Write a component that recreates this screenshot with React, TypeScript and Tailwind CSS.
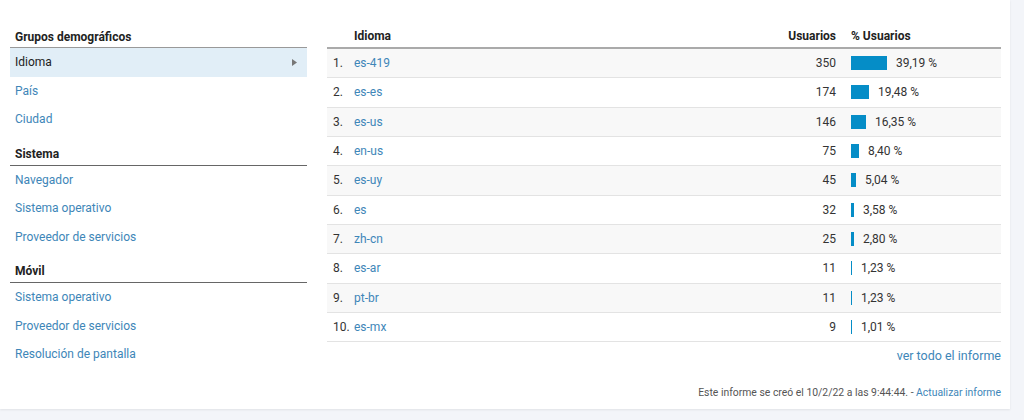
import React from 'react';

const LINK = 'text-[#3e86b8]';

const SECTIONS = [
  { title: 'Grupos demográficos', items: ['Idioma', 'País', 'Ciudad'] },
  { title: 'Sistema', items: ['Navegador', 'Sistema operativo', 'Proveedor de servicios'] },
  { title: 'Móvil', items: ['Sistema operativo', 'Proveedor de servicios', 'Resolución de pantalla'] },
];

const ROWS = [
  { lang: 'es-419', users: 350, pct: 39.19 },
  { lang: 'es-es', users: 174, pct: 19.48 },
  { lang: 'es-us', users: 146, pct: 16.35 },
  { lang: 'en-us', users: 75, pct: 8.4 },
  { lang: 'es-uy', users: 45, pct: 5.04 },
  { lang: 'es', users: 32, pct: 3.58 },
  { lang: 'zh-cn', users: 25, pct: 2.8 },
  { lang: 'es-ar', users: 11, pct: 1.23 },
  { lang: 'pt-br', users: 11, pct: 1.23 },
  { lang: 'es-mx', users: 9, pct: 1.01 },
];

const fmt = (n: number) => n.toFixed(2).replace('.', ',') + ' %';

export default function App() {
  return (
    <div
      className="w-[1024px] h-[420px] bg-[#f3f5f9] overflow-hidden text-[12px] text-[#222]"
      style={{ fontFamily: 'Roboto, "Liberation Sans", sans-serif' }}
    >
      <div className="w-[1010px] h-[409px] bg-white shadow-[0_1px_2px_rgba(0,0,0,0.08)] flex pl-[10px] pr-[9px] pt-[17px]">
        {/* Left navigation */}
        <div className="w-[297px] shrink-0">
          {SECTIONS.map((s, si) => (
            <div key={s.title}>
              <div
                className={`flex items-end pl-[5px] font-bold border-b ${
                  si === 0 ? 'h-[31px] pb-[1px] border-[#999]' : 'h-[32px] pb-[2px] border-[#666]'
                }`}
              >
                {s.title}
              </div>
              {s.items.map((item, ii) => {
                const active = si === 0 && ii === 0;
                return (
                  <div
                    key={item}
                    className={`h-[28.5px] flex items-center pl-[5px] pr-[10px] ${
                      active ? 'bg-[#e1eef7] text-[#222]' : LINK
                    }`}
                  >
                    <span className="flex-1">{item}</span>
                    {active && (
                      <svg width="5" height="7" viewBox="0 0 5 7">
                        <path d="M0 0 L5 3.5 L0 7 Z" fill="#777" />
                      </svg>
                    )}
                  </div>
                );
              })}
            </div>
          ))}
        </div>

        {/* Table */}
        <div className="flex-1 ml-[20px] flex flex-col">
          <div className="h-[32px] flex items-end pb-[2px] font-bold border-b-2 border-[#aaa] pl-[27px]">
            <span className="flex-1">Idioma</span>
            <span className="w-[100px] text-right">Usuarios</span>
            <span className="w-[165px] pl-[15px]">% Usuarios</span>
          </div>
          {ROWS.map((r, i) => (
            <div
              key={r.lang}
              className={`h-[29.33px] flex items-center border-b border-[#e3e3e3] pl-[6px] ${
                i % 2 === 0 ? 'bg-[#f8f8f8]' : 'bg-white'
              }`}
            >
              <span className="w-[21px] text-[#333]">{i + 1}.</span>
              <span className={`flex-1 ${LINK}`}>{r.lang}</span>
              <span className="w-[100px] text-right text-[#333]">{r.users}</span>
              <span className="w-[165px] pl-[15px] flex items-center text-[#333]">
                <span
                  className="h-[14px] bg-[#058dc7] shrink-0"
                  style={{ width: Math.max(1, Math.round((r.pct / 39.19) * 36)) }}
                />
                <span className="ml-[9px]">{fmt(r.pct)}</span>
              </span>
            </div>
          ))}
          <div className={`text-right mt-[5px] text-[12.5px] ${LINK}`}>ver todo el informe</div>
          <div className="text-right mt-[19px] text-[10.4px] text-[#555]">
            Este informe se creó el 10/2/22 a las 9:44:44. - <span className={LINK}>Actualizar informe</span>
          </div>
        </div>
      </div>
    </div>
  );
}
